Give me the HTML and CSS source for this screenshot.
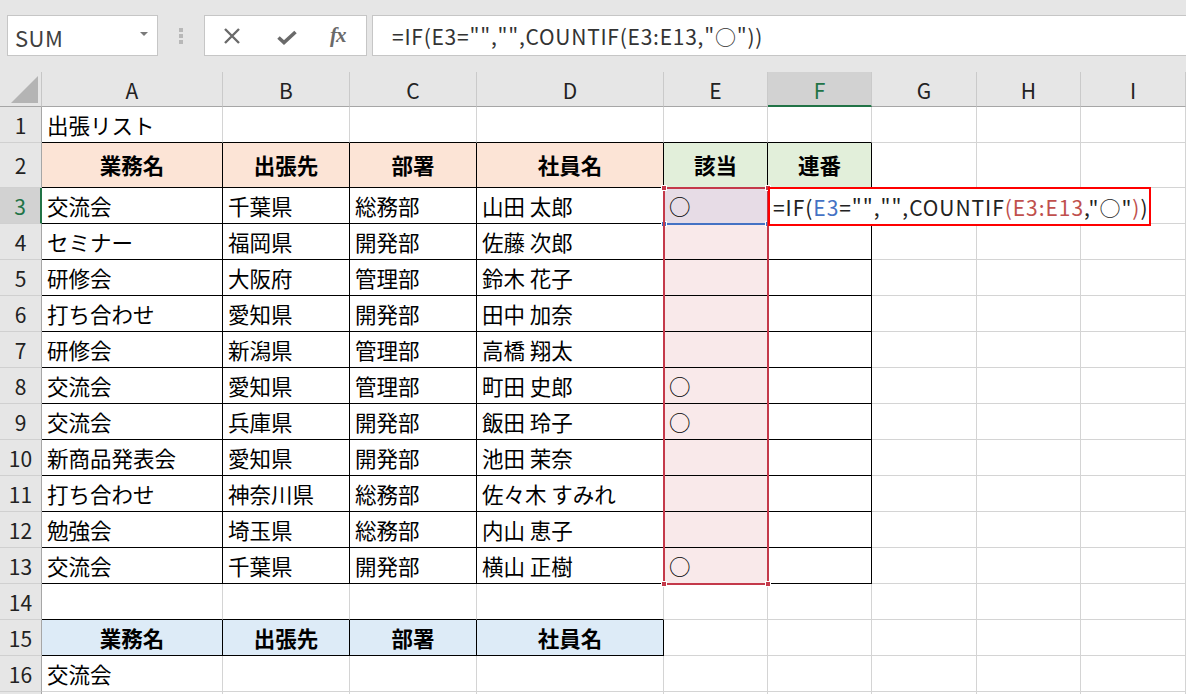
FILE: index.html
```html
<!DOCTYPE html>
<html lang="ja">
<head>
<meta charset="utf-8">
<title>出張リスト</title>
<link rel="stylesheet" href="styles.css">
</head>
<body>
<div class="toolbar">
  <div class="namebox"><span class="nb-text">SUM</span><span class="nb-arrow"></span></div>
  <div class="grip"><i></i><i></i><i></i></div>
  <div class="fbtns">
    <svg class="ic-x" width="18" height="16" viewBox="0 0 18 16"><path d="M2 1L16 15M16 1L2 15" stroke="#6a6a6a" stroke-width="2.4" fill="none"/></svg>
    <svg class="ic-ok" width="20" height="15" viewBox="0 0 20 15"><path d="M1.5 7.5L7 12.5L18.5 2" stroke="#6a6a6a" stroke-width="3.6" fill="none"/></svg>
    <span class="fx">fx</span>
  </div>
  <div class="fbar">=IF(E3="","",COUNTIF(E3:E13,"○"))</div>
</div>

<div class="sheet">
  <div class="row hdr">
    <div class="corner"><span class="tri"></span></div>
    <div class="ch">A</div><div class="ch">B</div><div class="ch">C</div><div class="ch">D</div><div class="ch">E</div><div class="ch sel">F</div><div class="ch">G</div><div class="ch">H</div><div class="ch">I</div>
  </div>

  <div class="row">
    <div class="rh">1</div>
    <div class="c bb">出張リスト</div><div class="c bb"></div><div class="c bb"></div><div class="c bb"></div><div class="c bb"></div><div class="c bb"></div><div class="c"></div><div class="c"></div><div class="c"></div>
  </div>

  <div class="row tall">
    <div class="rh">2</div>
    <div class="c k h pe">業務名</div><div class="c k h pe">出張先</div><div class="c k h pe">部署</div><div class="c k h pe">社員名</div><div class="c k h gr">該当</div><div class="c k h gr">連番</div><div class="c"></div><div class="c"></div><div class="c"></div>
  </div>

  <div class="row">
    <div class="rh rsel">3</div>
    <div class="c k">交流会</div><div class="c k">千葉県</div><div class="c k">総務部</div><div class="c k">山田 太郎</div><div class="c k e3">○</div><div class="c k"></div><div class="c"></div><div class="c"></div><div class="c"></div>
  </div>

  <div class="row">
    <div class="rh">4</div>
    <div class="c k">セミナー</div><div class="c k">福岡県</div><div class="c k">開発部</div><div class="c k">佐藤 次郎</div><div class="c k er"></div><div class="c k"></div><div class="c"></div><div class="c"></div><div class="c"></div>
  </div>

  <div class="row">
    <div class="rh">5</div>
    <div class="c k">研修会</div><div class="c k">大阪府</div><div class="c k">管理部</div><div class="c k">鈴木 花子</div><div class="c k er"></div><div class="c k"></div><div class="c"></div><div class="c"></div><div class="c"></div>
  </div>

  <div class="row">
    <div class="rh">6</div>
    <div class="c k">打ち合わせ</div><div class="c k">愛知県</div><div class="c k">開発部</div><div class="c k">田中 加奈</div><div class="c k er"></div><div class="c k"></div><div class="c"></div><div class="c"></div><div class="c"></div>
  </div>

  <div class="row">
    <div class="rh">7</div>
    <div class="c k">研修会</div><div class="c k">新潟県</div><div class="c k">管理部</div><div class="c k">高橋 翔太</div><div class="c k er"></div><div class="c k"></div><div class="c"></div><div class="c"></div><div class="c"></div>
  </div>

  <div class="row">
    <div class="rh">8</div>
    <div class="c k">交流会</div><div class="c k">愛知県</div><div class="c k">管理部</div><div class="c k">町田 史郎</div><div class="c k er">○</div><div class="c k"></div><div class="c"></div><div class="c"></div><div class="c"></div>
  </div>

  <div class="row">
    <div class="rh">9</div>
    <div class="c k">交流会</div><div class="c k">兵庫県</div><div class="c k">開発部</div><div class="c k">飯田 玲子</div><div class="c k er">○</div><div class="c k"></div><div class="c"></div><div class="c"></div><div class="c"></div>
  </div>

  <div class="row">
    <div class="rh">10</div>
    <div class="c k">新商品発表会</div><div class="c k">愛知県</div><div class="c k">開発部</div><div class="c k">池田 茉奈</div><div class="c k er"></div><div class="c k"></div><div class="c"></div><div class="c"></div><div class="c"></div>
  </div>

  <div class="row">
    <div class="rh">11</div>
    <div class="c k">打ち合わせ</div><div class="c k">神奈川県</div><div class="c k">総務部</div><div class="c k">佐々木 すみれ</div><div class="c k er"></div><div class="c k"></div><div class="c"></div><div class="c"></div><div class="c"></div>
  </div>

  <div class="row">
    <div class="rh">12</div>
    <div class="c k">勉強会</div><div class="c k">埼玉県</div><div class="c k">総務部</div><div class="c k">内山 恵子</div><div class="c k er"></div><div class="c k"></div><div class="c"></div><div class="c"></div><div class="c"></div>
  </div>

  <div class="row">
    <div class="rh">13</div>
    <div class="c k">交流会</div><div class="c k">千葉県</div><div class="c k">開発部</div><div class="c k">横山 正樹</div><div class="c k er">○</div><div class="c k"></div><div class="c"></div><div class="c"></div><div class="c"></div>
  </div>

  <div class="row">
    <div class="rh">14</div>
    <div class="c bb"></div><div class="c bb"></div><div class="c bb"></div><div class="c bb"></div><div class="c"></div><div class="c"></div><div class="c"></div><div class="c"></div><div class="c"></div>
  </div>

  <div class="row">
    <div class="rh">15</div>
    <div class="c k h bl">業務名</div><div class="c k h bl">出張先</div><div class="c k h bl">部署</div><div class="c k h bl">社員名</div><div class="c"></div><div class="c"></div><div class="c"></div><div class="c"></div><div class="c"></div>
  </div>

  <div class="row">
    <div class="rh">16</div>
    <div class="c">交流会</div><div class="c"></div><div class="c"></div><div class="c"></div><div class="c"></div><div class="c"></div><div class="c"></div><div class="c"></div><div class="c"></div>
  </div>

  <div class="row">
    <div class="rh"></div>
    <div class="c"></div><div class="c"></div><div class="c"></div><div class="c"></div><div class="c"></div><div class="c"></div><div class="c"></div><div class="c"></div><div class="c"></div>
  </div>

  <div class="ref-blue"><i class="sq bl-l"></i><i class="sq bl-r"></i></div>
  <div class="ref-red"><i class="sq tl"></i><i class="sq tr"></i><i class="sq bl-l"></i><i class="sq bl-r"></i></div>
  <div class="callout">=IF(<span class="fb">E3</span>="","",COUNTIF<span class="fr">(E3:E13</span>,"○"<span class="fr">)</span>)</div>
</div>
</body>
</html>
```

FILE: styles.css
```css
* { box-sizing: border-box; }
html, body { margin: 0; padding: 0; }
body {
  width: 1186px;
  height: 694px;
  overflow: hidden;
  background: #ffffff;
  font-family: "Noto Sans CJK JP", "Noto Sans", "Liberation Sans", sans-serif;
  color: #000;
}

/* ---------- toolbar ---------- */
.toolbar {
  height: 72px;
  background: #e6e6e6;
  display: flex;
  align-items: flex-start;
  padding-top: 15px;
}
.namebox {
  margin-left: 7px;
  width: 151px;
  height: 41px;
  background: #fff;
  border: 1px solid #c6c6c6;
  display: flex;
  align-items: center;
  justify-content: space-between;
  padding: 0 9px 0 7px;
}
.nb-text {
  font-family: "Noto Sans CJK JP", sans-serif;
  font-size: 22px;
  color: #404040;
  padding-top: 3px;
  letter-spacing: 0.5px;
}
.nb-arrow {
  width: 0; height: 0;
  border-left: 4px solid transparent;
  border-right: 4px solid transparent;
  border-top: 4px solid #7a7a7a;
  margin-top: -4px;
}
.grip {
  margin-left: 21px;
  margin-top: 13px;
  display: flex;
  flex-direction: column;
  gap: 2px;
}
.grip i { display: block; width: 4px; height: 4px; background: #b8b8b8; }
.fbtns {
  margin-left: 21px;
  width: 163px;
  height: 41px;
  background: #fff;
  border: 1px solid #c6c6c6;
  display: flex;
  align-items: center;
  padding-left: 18px;
}
.ic-x { margin-top: 1px; }
.ic-ok { margin-left: 36px; margin-top: 3px; }
.fx {
  margin-left: 33px;
  font-family: "Liberation Serif", serif;
  font-style: italic;
  font-weight: bold;
  font-size: 21px;
  color: #6a6a6a;
  letter-spacing: -1px;
}
.fbar {
  margin-left: 5px;
  flex: 1;
  margin-right: -2px;
  height: 41px;
  background: #fff;
  border: 1px solid #c6c6c6;
  display: flex;
  align-items: center;
  padding-left: 19px;
  font-family: "Noto Sans CJK JP", sans-serif;
  font-size: 21px;
  letter-spacing: 0.75px;
  color: #333;
  padding-top: 1px;
}

/* ---------- sheet ---------- */
.sheet { position: relative; }
.row {
  display: grid;
  grid-template-columns: 42px 181px 127px 127px 187px 104px 104px 105px 104px 105px;
  height: 36px;
}
.row.hdr { height: 35px; }
.row.tall { height: 45px; }

.corner {
  position: relative;
  background: #e6e6e6;
  border-right: 1px solid #c6c6c6;
  border-bottom: 1px solid #a6a6a6;
}
.tri {
  position: absolute;
  right: 3px;
  bottom: 3px;
  width: 0; height: 0;
  border-left: 27px solid transparent;
  border-bottom: 27px solid #b4b4b4;
}
.ch {
  background: #e6e6e6;
  border-right: 1px solid #cacaca;
  border-bottom: 1px solid #a6a6a6;
  display: flex;
  align-items: center;
  justify-content: center;
  font-size: 21px;
  color: #222;
  padding-top: 2px;
}
.ch.sel {
  background: #d2d2d2;
  color: #217346;
  border-bottom: 2px solid #217346;
  padding-top: 3px;
}
.rh {
  background: #e6e6e6;
  border-right: 1px solid #a6a6a6;
  border-bottom: 1px solid #d0d0d0;
  display: flex;
  align-items: center;
  justify-content: center;
  font-size: 21px;
  color: #222;
}
.rh.rsel {
  background: #d2d2d2;
  color: #217346;
  border-right: 2px solid #217346;
}
.c {
  border-right: 1px solid #d4d4d4;
  border-bottom: 1px solid #d4d4d4;
  display: flex;
  align-items: center;
  padding-left: 5px;
  padding-bottom: 1px;
  font-size: 21.5px;
  white-space: nowrap;
  overflow: visible;
}
.c.k { border-right-color: #000; border-bottom-color: #000; }
.c.bb { border-bottom-color: #000; }
.c.h { justify-content: center; padding-left: 0; font-weight: bold; }
.pe { background: #fce4d6; }
.gr { background: #e2efda; }
.bl { background: #ddebf7; }
.e3 { background: #e7dce6; }
.er { background: #f9e9ea; }

/* reference highlight boxes */
.ref-blue {
  position: absolute;
  left: 663px;
  top: 115px;
  width: 106px;
  height: 38px;
  border: 2px solid #4472c4;
}
.ref-red {
  position: absolute;
  left: 663px;
  top: 115px;
  width: 106px;
  height: 398px;
  border: 2px solid #c4394a;
}
.sq {
  position: absolute;
  width: 6px;
  height: 6px;
  border: 1px solid #fff;
}
.ref-red .sq { background: #c4394a; }
.ref-blue .sq { background: #4472c4; }
.sq.tl { left: -4px; top: -4px; }
.sq.tr { right: -4px; top: -4px; }
.sq.bl-l { left: -4px; bottom: -4px; }
.sq.bl-r { right: -4px; bottom: -4px; }

.callout {
  position: absolute;
  left: 768px;
  top: 115px;
  width: 383px;
  height: 39px;
  border: 2px solid #ff0000;
  background: #fff;
  display: flex;
  align-items: center;
  padding-left: 3px;
  font-family: "Noto Sans CJK JP", sans-serif;
  font-size: 21px;
  letter-spacing: 0.95px;
  color: #222;
  white-space: nowrap;
}
.fb { color: #4472c4; }
.fr { color: #c0504d; }
```
